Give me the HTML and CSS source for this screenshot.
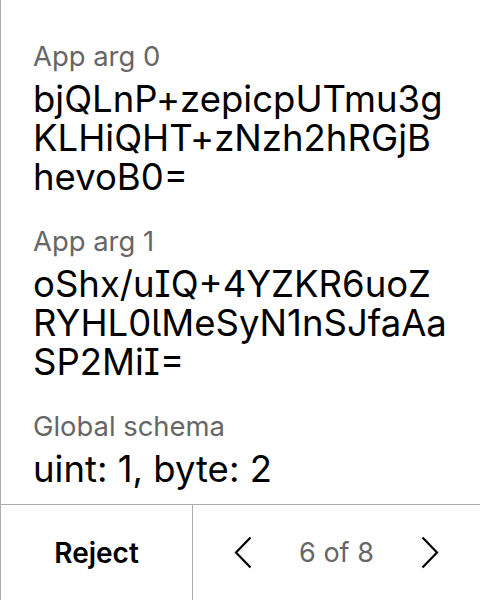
FILE: index.html
```html
<!DOCTYPE html>
<html lang="en">
<head>
<meta charset="utf-8">
<title>App call</title>
<link rel="stylesheet" href="styles.css">
</head>
<body>
<div class="page">
  <main class="content">
    <section class="field">
      <div class="label">App arg 0</div>
      <div class="value">bjQLnP+zepicpUTmu3gKLHiQHT+zNzh2hRGjBhevoB0=</div>
    </section>
    <section class="field">
      <div class="label">App arg 1</div>
      <div class="value">oShx/uIQ+4YZKR6uoZRYHL0lMeSyN1nSJfaAaSP2MiI=</div>
    </section>
    <section class="field">
      <div class="label">Global schema</div>
      <div class="value">uint: 1, byte: 2</div>
    </section>
  </main>
  <footer class="bar">
    <button class="reject">Reject</button>
    <div class="pager">
      <button class="nav" aria-label="Previous">
        <svg width="18" height="33" viewBox="0 0 18 33"><polyline points="16.5,1.5 2,16.5 16.5,31.5" fill="none" stroke="#000" stroke-width="2.2"/></svg>
      </button>
      <span class="count">6 of 8</span>
      <button class="nav" aria-label="Next">
        <svg width="18" height="33" viewBox="0 0 18 33"><polyline points="1.5,1.5 16,16.5 1.5,31.5" fill="none" stroke="#000" stroke-width="2.2"/></svg>
      </button>
    </div>
  </footer>
</div>
</body>
</html>
```

FILE: styles.css
```css
html, body {
  margin: 0;
  padding: 0;
  background: #fff;
}
body {
  font-family: Inter, "Noto Sans", sans-serif;
  color: #000;
}
.page {
  width: 480px;
  height: 600px;
  box-sizing: border-box;
  border-left: 1px solid #ababab;
  display: flex;
  flex-direction: column;
}
.content {
  flex: 1;
  padding: 39.5px 33px 0 32px;
  display: flex;
  flex-direction: column;
  gap: 28px;
  overflow: hidden;
}
.field {
  display: flex;
  flex-direction: column;
  gap: 7px;
}
.label {
  font-size: 27.4px;
  line-height: 33px;
  color: #666;
}
.value {
  font-size: 36.5px;
  line-height: 39px;
  word-break: break-all;
  font-feature-settings: "cv05", "cv08";
}
.bar {
  height: 96px;
  box-sizing: border-box;
  border-top: 1px solid #ababab;
  display: flex;
}
button {
  font-family: inherit;
  background: none;
  border: none;
  padding: 0;
  margin: 0;
  color: #000;
  cursor: pointer;
}
.reject {
  width: 191px;
  font-size: 28px;
  font-weight: 600;
}
.pager {
  flex: 1;
  border-left: 1px solid #ababab;
  display: flex;
  align-items: center;
  justify-content: space-between;
  padding: 0 41px 0 41px;
}
.nav {
  width: 18px;
  height: 33px;
  display: flex;
}
.count {
  font-size: 27px;
  color: #666;
}
```
